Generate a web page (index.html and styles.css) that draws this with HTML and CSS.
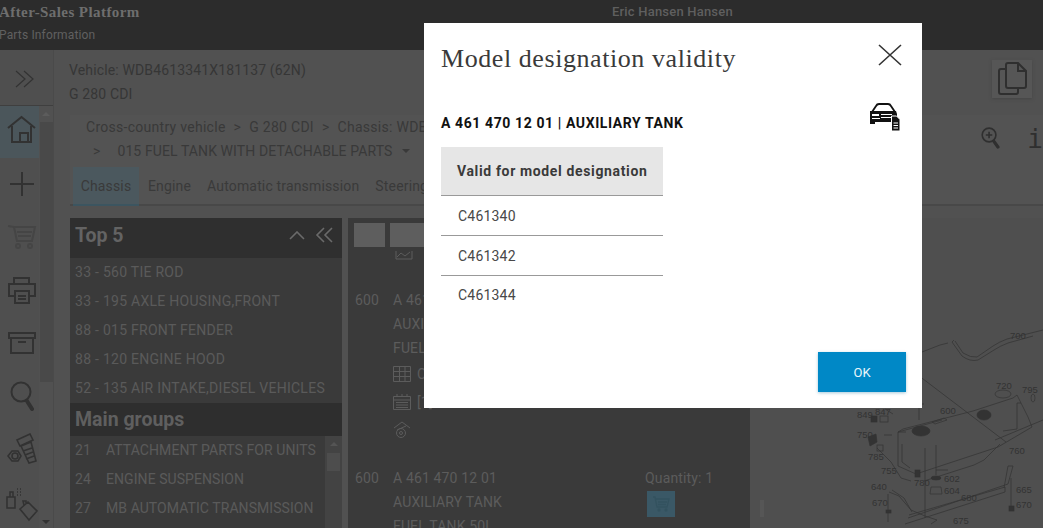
FILE: index.html
```html
<!DOCTYPE html>
<html lang="en">
<head>
<meta charset="utf-8">
<title>Parts Information</title>
<link rel="stylesheet" href="styles.css">
</head>
<body>
<div class="page">
  <header class="topbar">
    <div class="brand">
      <div class="brand-title">After-Sales Platform</div>
      <div class="brand-sub">Parts Information</div>
    </div>
    <div class="user">Eric Hansen Hansen</div>
  </header>
  <div class="main">
    <nav class="sidebar">
      <div class="side-toggle">
        <svg width="22" height="18" viewBox="0 0 22 18" class="ico"><path d="M2 1l9 8-9 8M10 1l9 8-9 8"/></svg>
      </div>
      <div class="side-scroll">
        <ul class="side-list">
          <li class="side-item active"><svg width="30" height="30" viewBox="0 0 30 30" class="ico2"><path d="M1 13L14.500 2 28 13M5 11v16h19V11M13 27v-9h8v9"/></svg></li>
          <li class="side-item"><svg width="26" height="26" viewBox="0 0 26 26" class="ico2"><path d="M1 13h24M13 1v24"/></svg></li>
          <li class="side-item"><svg width="30" height="26" viewBox="0 0 30 26" class="ico2 faint"><path d="M1 2l6 1h21l-3 14H10L7 3M10 8h15M11 12h13"/><circle cx="11" cy="22" r="2"/><circle cx="23" cy="22" r="2"/></svg></li>
          <li class="side-item"><svg width="30" height="28" viewBox="0 0 30 28" class="ico2"><path d="M7 8V2h15v6M7 20H2V8h26v12h-6M8 15h14v12H8zM11 20h8M11 23h8"/></svg></li>
          <li class="side-item"><svg width="28" height="22" viewBox="0 0 28 22" class="ico2"><path d="M1 1h26v5H1zM3 6v15h22V6M10 10h8"/></svg></li>
          <li class="side-item"><svg width="24" height="30" viewBox="0 0 24 30" class="ico2"><circle cx="11" cy="11" r="9.500"/><path d="M17 20l5 8" class="thick"/></svg></li>
          <li class="side-item"><svg width="30" height="32" viewBox="0 0 30 32" class="ico2 fine"><path d="M10 7l13-6 3 6-13 6zM14 13l10-4 5 19-7 2zM16 18l9-3M18 22l8-3M19 26l8-3"/><path d="M1 23l4-5h6l3 5-3 5H5zM5 23a3 3 0 1 0 6 0 3 3 0 1 0-6 0"/></svg></li>
          <li class="side-item last"><svg width="32" height="36" viewBox="0 0 32 36" class="ico2 fine"><path d="M1 10h8v11H1zM4 10V5h3v5M11 2h1M14 2h1M11 5h1M14 5h1M11 8h1M14 8h1"/><path d="M14 22l8-7 9 9-8 9zM18 18l-1-4h3v3"/></svg></li>
        </ul>
        <div class="side-bar"><span class="side-arrow up"></span><span class="side-thumb"></span><span class="side-arrow down"></span></div>
      </div>
    </nav>
    <div class="content">
      <div class="vehicle-row">
        <div class="vehicle">
          <div>Vehicle: WDB4613341X181137 (62N)</div>
          <div>G 280 CDI</div>
        </div>
        <button class="copy-btn" aria-label="Copy">
          <svg width="30" height="34" viewBox="0 0 30 34" class="ico3"><path d="M9 3a2 2 0 0 1 2-2h10l8 8v15a2 2 0 0 1-2 2H11a2 2 0 0 1-2-2zM21 1v8h8M9 7H4a2 2 0 0 0-2 2v21a2 2 0 0 0 2 2h15a2 2 0 0 0 2-2v-4"/></svg>
        </button>
      </div>
      <div class="crumb-panel">
        <div class="crumb-text">
          <div class="crumb-line">Cross-country vehicle<span class="sep">&gt;</span>G 280 CDI<span class="sep">&gt;</span>Chassis: WDB4613341X181137</div>
          <div class="crumb-line second"><span class="crumb-gt">&gt;</span><span>015 FUEL TANK WITH DETACHABLE PARTS</span><span class="caret"></span></div>
        </div>
        <div class="tools">
          <svg width="22" height="28" viewBox="0 0 24 30" class="ico3"><circle cx="10" cy="10" r="8.500"/><path d="M10 6v8M6 10h8"/><path d="M16 18l5 7" class="thick"/></svg>
          <span class="info">i</span>
        </div>
      </div>
      <div class="tabs">
        <span class="tab current">Chassis</span>
        <span class="tab">Engine</span>
        <span class="tab">Automatic transmission</span>
        <span class="tab">Steering</span>
      </div>
      <div class="panes">
        <aside class="groups">
          <div class="top-head">
            <span>Top 5</span>
            <span class="head-icons">
              <svg width="16" height="9" viewBox="0 0 16 9" class="ico4"><path d="M1 8l7-7 7 7"/></svg>
              <svg width="19" height="16" viewBox="0 0 19 16" class="ico4"><path d="M9 1L2 8l7 7M17 1l-7 7 7 7"/></svg>
            </span>
          </div>
          <ul class="top-list">
            <li>33 - 560 TIE ROD</li>
            <li>33 - 195 AXLE HOUSING,FRONT</li>
            <li>88 - 015 FRONT FENDER</li>
            <li>88 - 120 ENGINE HOOD</li>
            <li>52 - 135 AIR INTAKE,DIESEL VEHICLES</li>
          </ul>
          <div class="main-head">Main groups</div>
          <div class="main-wrap">
            <ul class="main-list">
              <li><span class="num">21</span>ATTACHMENT PARTS FOR UNITS</li>
              <li><span class="num">24</span>ENGINE SUSPENSION</li>
              <li><span class="num">27</span>MB AUTOMATIC TRANSMISSION</li>
            </ul>
            <div class="main-bar"><span class="main-arrow"></span><span class="main-thumb"></span></div>
          </div>
        </aside>
        <section class="parts">
          <div class="part-tools"><span class="sq"></span><span class="sq wide"></span></div>
          <svg width="18" height="10" viewBox="0 0 18 10" class="chart ico5"><path d="M1 1v8h16V1M2 7l4-4 4 3 5-4"/></svg>
          <div class="part first">
            <div class="pos">600</div>
            <div class="part-info">
              <div>A 461 470 12 01</div>
              <div>AUXILIARY TANK</div>
              <div>FUEL TANK 50L</div>
              <div class="meta"><svg width="18" height="16" viewBox="0 0 18 16" class="ico5"><path d="M.5.5h17v15H.5zM.5 5.500h17M.5 10.500h17M6.500.5v15M12 .5v15"/></svg><span>C461340</span></div>
              <div class="meta"><svg width="18" height="16" viewBox="0 0 18 16" class="ico5"><path d="M.5 2.500h17v13H.5zM.5 6h17M4 0v3M9 0v3M14 0v3M3 8.500h12M3 11h12M3 13.500h12"/></svg><span>[1]</span></div>
              <div class="meta"><svg width="18" height="18" viewBox="0 0 18 18" class="ico5"><path d="M1 7l8-6 8 6M4 9l9-4"/><circle cx="8" cy="12" r="4.500"/><circle cx="8" cy="12" r="1.500"/></svg></div>
            </div>
          </div>
          <div class="part">
            <div class="pos">600</div>
            <div class="part-info">
              <div>A 461 470 12 01</div>
              <div>AUXILIARY TANK</div>
              <div>FUEL TANK 50L</div>
            </div>
            <div class="qty">
              <div>Quantity: 1</div>
              <span class="cart"><svg width="18" height="16" viewBox="0 0 18 16" class="ico6"><path d="M1 1h2l2 10h10l2-8H4M6 6h9M6 8.500h8"/><circle cx="7" cy="14" r="1"/><circle cx="14" cy="14" r="1"/></svg></span>
            </div>
          </div>
        </section>
        <div class="diagram">
          <svg width="293" height="310" viewBox="750 218 293 310" class="drawing">
            <rect x="760" y="500" width="4" height="17" class="handle"/>
            <g class="lines">
              <path d="M922 352l18-7 8-2M954 340l-2 2 10 14q8 6 16 4l16-10q6-4 14-7l25-7"/>
              <path d="M955 341l8 12q8 5 14 4l16-11q6-4 14-7l36-9"/>
              <path d="M906 366l100 76"/>
              <path d="M898 432l8 0M898 432v34l18 8 82-27 34-20-4-10-11-22-4 3-40 13-70 18zM898 432l44-12M902 444v18l8 6"/>
              <path d="M1003 431l14-2v-26h4M995 440l48-20M1000 444l-16 16-10 5-50 16"/>
              <path d="M893 414l-8-5M892 435l-8 0M877 448l14 14 10 16 10 3"/>
              <path d="M917 404l7 0M919 420v-18M925 448v70M936 445v30M936 470h12"/>
              <path d="M889 492l10 4 12 14 14 6 12 4-6 4M892 490l12 8 8 14"/>
              <path d="M905 524l100-32 0-5-96 28M908 518l100-34 5-18h-5l-4 22"/>
              <path d="M888 494v28"/>
              <path d="M1011 478v28"/>
            </g>
            <g class="solid">
              <rect x="871" y="416" width="6" height="6"/>
              <rect x="880" y="416" width="8" height="6" class="open"/>
              <path d="M868 437l8-3 1 8-7 4z"/>
              <rect x="877" y="445" width="6" height="6" class="open"/>
              <ellipse cx="921" cy="431" rx="9" ry="5"/>
              <ellipse cx="984" cy="415" rx="7" ry="5"/>
              <path d="M932 422l12-4 3 2-12 4z" class="open"/>
              <rect x="915" y="470" width="5" height="7"/>
              <ellipse cx="936" cy="478" rx="5" ry="2"/>
              <path d="M931 487h10l1 7h-12z" class="open"/>
              <ellipse cx="1003" cy="394" rx="8" ry="4" class="open"/>
              <ellipse cx="1033" cy="398" rx="2" ry="4" class="open"/>
              <rect x="886" y="510" width="5" height="3"/>
              <rect x="1009" y="506" width="5" height="5"/>
            </g>
            <g class="labels">
              <text x="1010" y="339">700</text>
              <text x="996" y="389">720</text>
              <text x="1022" y="393">795</text>
              <text x="940" y="414">600</text>
              <text x="857" y="418">849</text>
              <text x="875" y="415">847</text>
              <text x="857" y="438">750</text>
              <text x="868" y="460">785</text>
              <text x="1009" y="454">760</text>
              <text x="881" y="474">755</text>
              <text x="914" y="486">780</text>
              <text x="944" y="482">602</text>
              <text x="944" y="494">604</text>
              <text x="871" y="490">640</text>
              <text x="872" y="506">670</text>
              <text x="961" y="501">680</text>
              <text x="1016" y="493">665</text>
              <text x="1016" y="508">670</text>
              <text x="953" y="524">675</text>
            </g>
          </svg>
        </div>
      </div>
    </div>
  </div>
  <div class="modal" role="dialog">
    <div class="modal-head">
      <h1 class="modal-title">Model designation validity</h1>
      <svg width="24" height="24" viewBox="0 0 24 24" class="close"><path d="M1 2l22 20M23 2L1 22"/></svg>
    </div>
    <div class="part-row">
      <div class="part-name">A 461 470 12 01 | AUXILIARY TANK</div>
      <svg width="32" height="28" viewBox="0 0 32 28" class="car">
        <path d="M3 9l4-6q1-2 3-2h9q2 0 3 2l4 6" class="car-line"/>
        <path d="M1 8h26l1 3v7h-1v3H22v-2H6v2H1z"/>
        <path d="M3 11h7v2H3zM12 11h11v1H12zM12 14h10v1H12zM3 15h8v1H3z" class="car-cut"/>
        <path d="M22.500 13h5l3.500 3.500V28h-8.500z" class="car-doc"/>
        <path d="M24.500 20h4.500M24.500 22.500h4.500M24.500 25h4.500" class="car-cutline"/>
      </svg>
    </div>
    <table class="valid">
      <thead><tr><th>Valid for model designation</th></tr></thead>
      <tbody>
        <tr><td>C461340</td></tr>
        <tr><td>C461342</td></tr>
        <tr><td>C461344</td></tr>
      </tbody>
    </table>
    <div class="modal-foot"><button class="ok">OK</button></div>
  </div>
</div>
</body>
</html>
```
FILE: styles.css
```css
* { box-sizing: border-box; }
html, body { margin: 0; padding: 0; height: 100%; overflow: hidden; }
body { font-family: Roboto, "Liberation Sans", sans-serif; background: #515151; color: #2e2e2e; }
ul { list-style: none; margin: 0; padding: 0; }
.page { position: relative; width: 1043px; height: 528px; overflow: hidden; display: flex; flex-direction: column; }

.ico, .ico2, .ico3, .ico4, .ico5, .ico6 { fill: none; display: block; }
.ico { stroke: #333; stroke-width: 1.2; }
.ico2 { stroke: #323232; stroke-width: 2; }
.ico2.fine { stroke-width: 1.6; }
.ico2.faint { stroke: #454545; }
.thick { stroke-width: 4; stroke-linecap: round; }
.ico3 { stroke: #2f2f2f; stroke-width: 2; }
.ico4 { stroke: #6a6a6a; stroke-width: 1.6; }
.ico5 { stroke: #5c5c5c; stroke-width: 1; }
.ico6 { stroke: #33525f; stroke-width: 1.3; }

.topbar { height: 50px; flex: none; background: #2c2c2c; display: flex; position: relative; }
.brand { width: 613px; margin-left: -1px; flex: none; }
.brand-title { font-family: "Liberation Serif", serif; font-weight: bold; font-size: 15px; line-height: 18px; margin-top: 3px; color: #6e6e6e; letter-spacing: .42px; }
.brand-sub { font-size: 12px; line-height: 16px; margin-top: 6px; color: #606060; letter-spacing: .15px; }
.user { font-size: 13px; font-weight: 500; line-height: 16px; margin-top: 4px; color: #5f5f5f; letter-spacing: .2px; }

.main { flex: 1; display: flex; min-height: 0; }
.sidebar { width: 54px; flex: none; background: #4f4f4f; border-right: 1px solid #4a4a4a; display: flex; flex-direction: column; }
.side-toggle { height: 56px; flex: none; display: flex; align-items: center; justify-content: center; padding-top: 2px; padding-right: 3px; border-bottom: 1px solid #3f3f3f; }
.side-scroll { flex: 1; display: flex; min-height: 0; overflow: hidden; }
.side-list { width: 39px; flex: none; }
.side-item { height: 53px; display: flex; align-items: center; justify-content: center; width: 44px; padding-bottom: 2px; }
.side-item.active { background: #4b565b; height: 52px; padding-bottom: 5px; }
.side-item.last { padding: 4px 0 0; }
.side-bar { width: 14px; flex: none; background: #515151; display: flex; flex-direction: column; align-items: center; position: relative; }
.side-arrow { width: 0; height: 0; border-left: 4px solid transparent; border-right: 4px solid transparent; flex: none; }
.side-arrow.up { border-bottom: 4px solid #5c5c5c; margin-top: 6px; margin-bottom: 6px; }
.side-arrow.down { border-top: 4px solid #333; margin-top: auto; margin-bottom: 4px; }
.side-thumb { width: 13px; height: 260px; background: #494949; flex: none; }

.content { flex: 1; min-width: 0; display: flex; flex-direction: column; padding-left: 16px; }
.vehicle-row { height: 65px; flex: none; display: flex; justify-content: space-between; padding-top: 8px; }
.vehicle { margin-left: -1px; font-size: 14px; line-height: 24px; color: #363636; letter-spacing: .14px; }
.copy-btn { width: 40px; height: 38px; margin: 2px 11px 0 0; border: 0; padding: 0; background: #565656; box-shadow: 0 1px 3px #464646; display: flex; align-items: center; justify-content: center; }

.crumb-panel { height: 52px; flex: none; background: #535353; display: flex; justify-content: space-between; }
.crumb-text { width: 900px; flex: none; overflow: hidden; padding-left: 16px; font-size: 14px; line-height: 24px; color: #393939; letter-spacing: .28px; white-space: nowrap; }
.crumb-line { height: 24px; }
.sep { margin: 0 8px; }
.crumb-line.second { display: flex; align-items: center; letter-spacing: .1px; }
.crumb-gt { margin: 0 17px 0 7px; }
.caret { width: 0; height: 0; margin-left: 10px; border-left: 4px solid transparent; border-right: 4px solid transparent; border-top: 4px solid #393939; }
.tools { display: flex; align-items: flex-start; padding-top: 10px; gap: 27px; width: 62px; flex: none; margin-left: -89px; }
.info { font-family: "DejaVu Sans Mono", monospace; font-size: 26px; line-height: 28px; color: #2f2f2f; }

.tabs { height: 39px; flex: none; display: flex; background: #535353; border-bottom: 2px solid #484848; padding-left: 3px; font-size: 14px; color: #3a3a3a; letter-spacing: .16px; }
.tab { display: flex; align-items: center; padding-right: 16px; }
.tab.current { width: 66px; background: #4b585e; justify-content: center; padding: 0; margin-right: 9px; box-shadow: 0 2px 0 #3c5560; }

.panes { flex: 1; min-height: 0; display: flex; padding-top: 12px; background: #515151; }
.groups { width: 272px; flex: none; background: #3a3a3a; margin-right: 6px; display: flex; flex-direction: column; }
.top-head { height: 40px; flex: none; background: #2f2f2f; display: flex; justify-content: space-between; align-items: center; padding: 0 8px 6px 5px; font-size: 19.500px; font-weight: 700; color: #636363; }
.head-icons { display: flex; align-items: center; gap: 10px; }
.top-list { flex: none; height: 145px; }
.top-list li { height: 29px; line-height: 28px; font-size: 14px; color: #5a5a5a; padding-left: 5px; letter-spacing: .27px; white-space: nowrap; }
.main-head { height: 33px; flex: none; background: #2e2e2e; font-size: 19.500px; font-weight: 700; color: #5f5f5f; line-height: 33px; padding-left: 5px; }
.main-wrap { flex: 1; min-height: 0; display: flex; }
.main-list { flex: 1; overflow: hidden; }
.main-list li { height: 29px; line-height: 28px; font-size: 14px; color: #5a5a5a; padding-left: 5px; letter-spacing: .07px; white-space: nowrap; display: flex; }
.num { width: 31px; flex: none; }
.main-bar { width: 17px; flex: none; background: #434343; display: flex; flex-direction: column; align-items: center; }
.main-arrow { width: 0; height: 0; border-left: 4px solid transparent; border-right: 4px solid transparent; border-bottom: 4px solid #545454; margin: 6px 0 7px; }
.main-thumb { width: 13px; height: 18px; background: #4d4d4d; }

.parts { width: 402px; flex: none; background: #3a3a3a; overflow: hidden; font-size: 14px; color: #5c5c5c; letter-spacing: .15px; }
.part-tools { height: 29px; flex: none; display: flex; padding: 5px 0 0 6px; gap: 5px; }
.sq { width: 31px; height: 24px; background: #5e5e5e; }
.sq.wide { width: 60px; }
.chart { margin: 3px 0 0 47px; }
.part { display: flex; padding-left: 7px; }
.part.first { height: 178px; margin-top: 28px; }
.pos { width: 38px; flex: none; line-height: 24px; }
.part-info { width: 252px; flex: none; line-height: 24px; }
.meta { display: flex; align-items: center; gap: 6px; height: 28px; }
.qty { line-height: 24px; }
.cart { display: flex; width: 28px; height: 26px; margin: 1px 0 0 2px; background: #3a5866; align-items: center; justify-content: center; }

.diagram { flex: 1; min-width: 0; background: #4f4f4f; overflow: hidden; }
.drawing { display: block; }
.handle { fill: #565656; }
.lines path { fill: none; stroke: #363636; stroke-width: .8; }
.solid > * { fill: #333; stroke: #333; stroke-width: .7; }
.solid .open { fill: none; }
.labels text { font-family: "Liberation Sans", sans-serif; font-size: 9.500px; fill: #333; }

.modal { position: absolute; left: 424px; top: 23px; width: 498px; height: 385px; background: #fff; display: flex; flex-direction: column; padding: 0 16px 16px 17px; }
.modal-head { height: 66px; flex: none; display: flex; justify-content: space-between; }
.modal-title { margin: 19px 0 0; font-family: "Liberation Serif", serif; font-weight: normal; font-size: 26px; line-height: 34px; color: #3a3a3a; letter-spacing: .57px; }
.close { fill: none; stroke: #333; stroke-width: 1.600; margin: 20px 4px 0 0; flex: none; }
.part-row { height: 58px; flex: none; display: flex; justify-content: space-between; }
.part-name { margin-top: 23px; font-size: 14px; font-weight: 700; line-height: 22px; color: #111; letter-spacing: .6px; }
.car { margin: 14px 5px 0 0; flex: none; fill: #111; }
.car-line { fill: none; stroke: #111; stroke-width: 1.800; }
.car-cut { fill: #fff; }
.car-doc { fill: #111; stroke: #fff; stroke-width: 1; }
.car-cutline { fill: none; stroke: #fff; stroke-width: 1; }
.valid { width: 222px; border-collapse: collapse; font-size: 14px; }
.valid th { height: 48px; padding: 0 0 0 16px; text-align: left; background: #e6e6e6; border-bottom: 1px solid #999; font-weight: 700; color: #3a3a3a; white-space: nowrap; letter-spacing: .64px; }
.valid td { height: 40px; padding: 2px 0 0 17px; color: #484848; border-bottom: 1px solid #999; letter-spacing: .2px; }
.valid tr:last-child td { border-bottom: 0; padding-top: 0; }
.modal-foot { margin-top: auto; display: flex; justify-content: flex-end; }
.ok { width: 88px; height: 40px; border: 0; padding: 1px 0 0; background: #0088c6; color: #eaf6fb; font-family: Roboto, sans-serif; font-size: 13px; box-shadow: 0 1px 3px rgba(0, 100, 150, .35); }
```
